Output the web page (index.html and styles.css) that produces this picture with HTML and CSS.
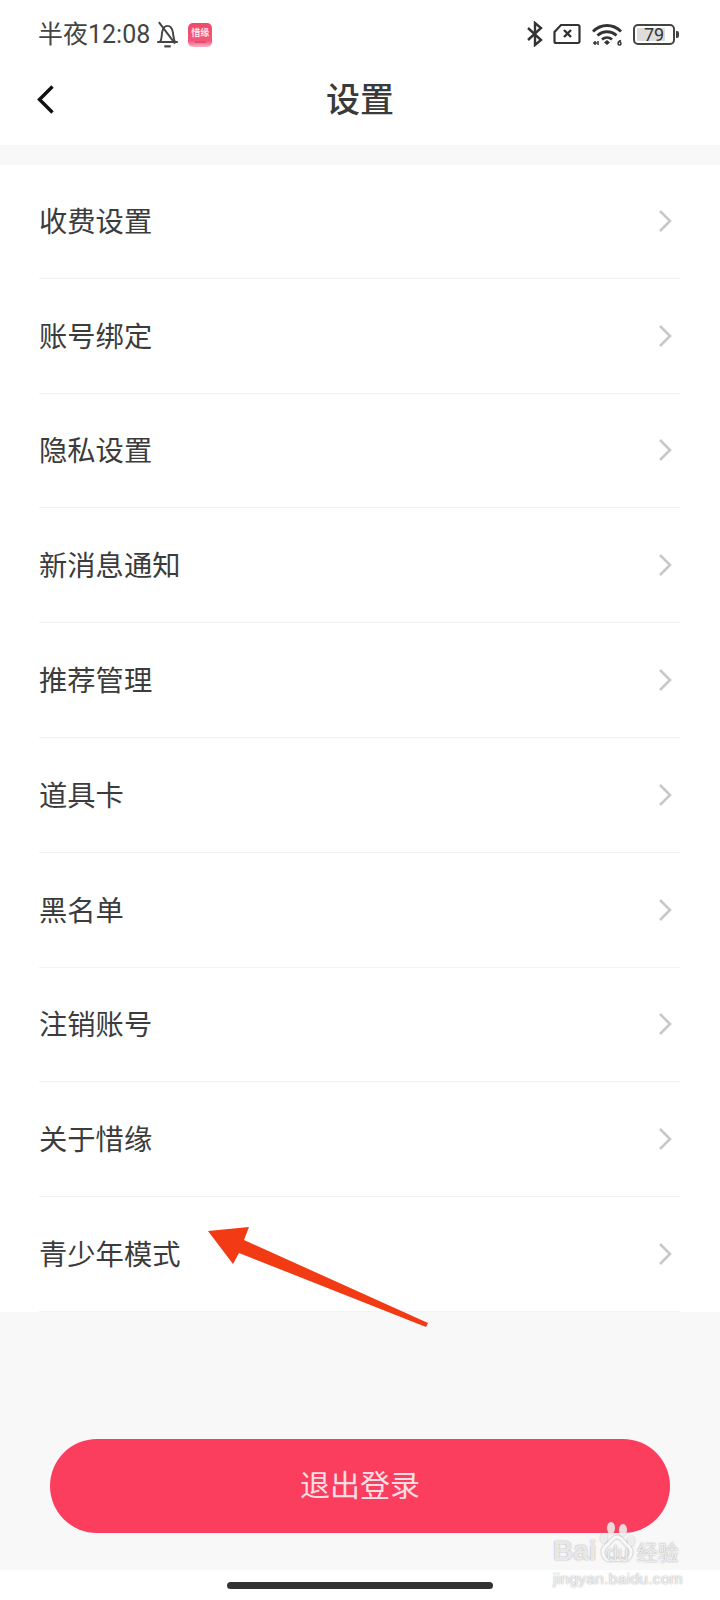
FILE: index.html
```html
<!DOCTYPE html>
<html lang="zh">
<head>
<meta charset="utf-8">
<title>设置</title>
<link rel="stylesheet" href="styles.css">
</head>
<body>
<div class="page">
  <div class="status">
    <div class="status-left">
      <span class="time">半夜12:08</span>
      <svg class="bell" viewBox="2 1 20 25" fill="none" stroke="#444" stroke-width="1.800"><path d="M2.500 20.500h19M5 20.500c2-2.500 1.500-6 2-9 .6-3.500 2.500-6 5-6s4.300 2 5 6c.5 3 .5 6 2 9"/><path d="M4 2l15 20"/><path d="M9 24.500h6" stroke-width="2"/></svg>
      <span class="app-badge"><span class="app-name">惜缘</span><span class="app-sub"></span></span>
    </div>
    <div class="status-right">
      <svg class="bt" viewBox="0 0 18 26" fill="none" stroke="#333" stroke-width="2.400"><path d="M2 7l13 12-6 5V2l6 5L2 19"/></svg>
      <svg class="sim" viewBox="0 0 28 22" fill="none" stroke="#333" stroke-width="2.200"><path d="M8 2h17a1.500 1.500 0 0 1 1.500 1.500v15a1.500 1.500 0 0 1-1.500 1.500H3a1.500 1.500 0 0 1-1.500-1.500V9z"/><path d="M11 7l7 7M18 7l-7 7" stroke-width="2.400"/></svg>
      <svg class="wifi" viewBox="0 0 32 24" fill="none" stroke="#333" stroke-width="2.800"><path d="M2 9.500c8-8 20-8 28 0M6.500 13.500c5.500-5 13.500-5 19 0M11 17.500c3-2.500 7-2.500 10 0"/><path d="M13 20.500l3-2.500 3 2.500-3 2.500z" fill="#333" stroke="none"/><path d="M2 21h4M4 19v4M7 19v4" stroke-width="1.500"/><path d="M30 18.500c-2 .5-3 1.500-3 3a1.500 1.500 0 1 0 1.500-1.500" stroke-width="1.500"/></svg>
      <span class="battery"><span class="battery-fill"></span><span class="battery-num">79</span></span><span class="battery-tip"></span>
    </div>
  </div>
  <header class="nav">
    <svg class="back" viewBox="0 0 20 32" fill="none" stroke="#111" stroke-width="3.400"><path d="M16.500 2.500L3.500 15.500l13 13"/></svg>
    <h1 class="title">设置</h1>
  </header>
  <div class="gap"></div>
  <ul class="list">
    <li class="row"><span>收费设置</span><svg class="chev" viewBox="0 0 14 24"><path d="M2 2l10 10L2 22"/></svg></li>
    <li class="row"><span>账号绑定</span><svg class="chev" viewBox="0 0 14 24"><path d="M2 2l10 10L2 22"/></svg></li>
    <li class="row"><span>隐私设置</span><svg class="chev" viewBox="0 0 14 24"><path d="M2 2l10 10L2 22"/></svg></li>
    <li class="row"><span>新消息通知</span><svg class="chev" viewBox="0 0 14 24"><path d="M2 2l10 10L2 22"/></svg></li>
    <li class="row"><span>推荐管理</span><svg class="chev" viewBox="0 0 14 24"><path d="M2 2l10 10L2 22"/></svg></li>
    <li class="row"><span>道具卡</span><svg class="chev" viewBox="0 0 14 24"><path d="M2 2l10 10L2 22"/></svg></li>
    <li class="row"><span>黑名单</span><svg class="chev" viewBox="0 0 14 24"><path d="M2 2l10 10L2 22"/></svg></li>
    <li class="row"><span>注销账号</span><svg class="chev" viewBox="0 0 14 24"><path d="M2 2l10 10L2 22"/></svg></li>
    <li class="row"><span>关于惜缘</span><svg class="chev" viewBox="0 0 14 24"><path d="M2 2l10 10L2 22"/></svg></li>
    <li class="row"><span>青少年模式</span><svg class="chev" viewBox="0 0 14 24"><path d="M2 2l10 10L2 22"/></svg></li>
  </ul>
  <div class="footer">
    <button class="logout">退出登录</button>
  </div>
  <div class="home"><span class="home-bar"></span></div>
  <svg class="arrow" viewBox="0 0 222 102"><polygon points="0,4 41,0 36,13 220,96 218,100 31,26 25,37"/></svg>
  <div class="watermark">
    <svg class="paw" viewBox="0 0 36 44"><ellipse class="toe" cx="11" cy="6" rx="4" ry="6"/><ellipse class="toe" cx="23" cy="8" rx="4" ry="6"/><ellipse class="toe" cx="4" cy="16" rx="3.500" ry="5"/><ellipse class="toe" cx="31" cy="19" rx="3.500" ry="5"/><path class="pad" d="M17 15c5 0 7 6 11 9 6 5 2 15-5 14-4-.5-8-.5-12 0-7 1-11-9-5-14 4-3 6-9 11-9z"/></svg>
    <div class="wm-main"><span class="wm-bai">Bai</span><span class="wm-du">du</span><span class="wm-cn">经验</span></div>
    <div class="wm-sub">jingyan.baidu.com</div>
  </div>
</div>
</body>
</html>
```

FILE: styles.css
```css
* { box-sizing: border-box; }
html, body { margin: 0; padding: 0; }
body { background: #fff; font-family: "Noto Sans CJK SC", "Noto Sans", sans-serif; }
.page { position: relative; width: 720px; height: 1600px; overflow: hidden; display: flex; flex-direction: column; background: #fff; }

.status { height: 68px; padding: 0 41px 0 38px; display: flex; justify-content: space-between; align-items: center; color: #444; }
.status-left { display: flex; align-items: center; padding-top: 1px; }
.time { font-family: "Roboto", "Noto Sans CJK SC", sans-serif; font-size: 25px; line-height: 28px; color: #444; }
.bell { width: 23px; height: 27px; margin-left: 6px; }
.app-badge { width: 24px; height: 24px; margin-left: 9px; padding-top: 4px; border-radius: 5px; background: linear-gradient(#ee4a6b, #f2587c 75%, #f8b5c5); display: flex; flex-direction: column; align-items: center; overflow: hidden; }
.app-name { font-size: 9px; line-height: 11px; font-weight: 700; color: #fde6eb; }
.app-sub { width: 11px; height: 2px; margin-top: 3px; background: #e0506c; }
.status-right { display: flex; align-items: center; }
.bt { width: 18px; height: 26px; }
.sim { width: 28px; height: 22px; margin-left: 9px; }
.wifi { width: 32px; height: 24px; margin-left: 10px; }
.battery { position: relative; width: 42px; height: 21px; margin-left: 10px; border: 2px solid #444; border-radius: 5px; display: flex; align-items: center; justify-content: center; }
.battery-fill { position: absolute; left: 2px; top: 2px; bottom: 2px; width: 28px; background: #ddd; border-radius: 1px; }
.battery-num { position: relative; font-family: "Roboto", sans-serif; font-size: 18px; line-height: 17px; color: #333; }
.battery-tip { width: 3px; height: 7px; margin-left: 1px; background: #444; border-radius: 0 2px 2px 0; }

.nav { position: relative; height: 77px; display: flex; justify-content: center; align-items: center; padding-bottom: 18px; }
.back { position: absolute; left: 36px; top: 16px; width: 20px; height: 32px; }
.title { margin: 0; font-size: 34px; line-height: 44px; font-weight: 500; color: #3a3a3a; }

.gap { height: 20px; background: #f8f8f9; }

.list { margin: -1px 0 0; padding: 0; list-style: none; }
.row { height: 114.800px; margin-left: 39px; margin-right: 40px; padding-bottom: 2px; display: flex; align-items: center; justify-content: space-between; border-bottom: 1px solid #f3f3f3; font-size: 28.300px; line-height: 40px; color: #3c3c3c; }
.chev { width: 14px; height: 24px; margin-right: 8px; margin-top: 2px; fill: none; stroke: #c8c8c8; stroke-width: 2.600; }

.footer { flex: 1; background: #f8f8f9; padding: 127px 50px 0; }
.logout { display: block; width: 100%; height: 94px; padding: 0 0 5px; border: 0; border-radius: 47px; background: #fb3d5e; color: #fbdde3; font-family: inherit; font-size: 30px; line-height: 40px; }
.home { height: 30px; display: flex; justify-content: center; padding-top: 12px; }
.home-bar { width: 266px; height: 7px; border-radius: 4px; background: #333; }

.arrow { position: absolute; left: 208px; top: 1227px; width: 222px; height: 102px; fill: #f23a14; }

.watermark { position: absolute; left: 553px; top: 1522px; width: 130px; color: #fff; }
.paw { position: absolute; left: 47px; top: 0; width: 36px; height: 44px; filter: drop-shadow(0 0 1px rgba(150,150,150,.9)); }
.toe { fill: #fff; fill-opacity: .72; }
.pad { fill: none; stroke: #fff; stroke-opacity: .9; stroke-width: 3; }
.wm-main { position: relative; display: flex; align-items: baseline; margin-top: 13px; font-family: "Liberation Sans", sans-serif; font-size: 28px; line-height: 32px; color: rgba(255,255,255,.8); text-shadow: 0 0 1.500px rgba(130,130,130,.9); white-space: nowrap; }
.wm-bai { font-weight: 700; }
.wm-du { font-size: 20px; margin-left: 10px; }
.wm-cn { font-family: "Noto Sans CJK SC", sans-serif; font-size: 21px; margin-left: 8px; }
.wm-sub { font-family: "Liberation Sans", sans-serif; font-size: 15.500px; line-height: 18px; letter-spacing: .3px; margin-top: 1px; color: rgba(255,255,255,.8); text-shadow: 0 0 1.500px rgba(130,130,130,.9); white-space: nowrap; }
```
